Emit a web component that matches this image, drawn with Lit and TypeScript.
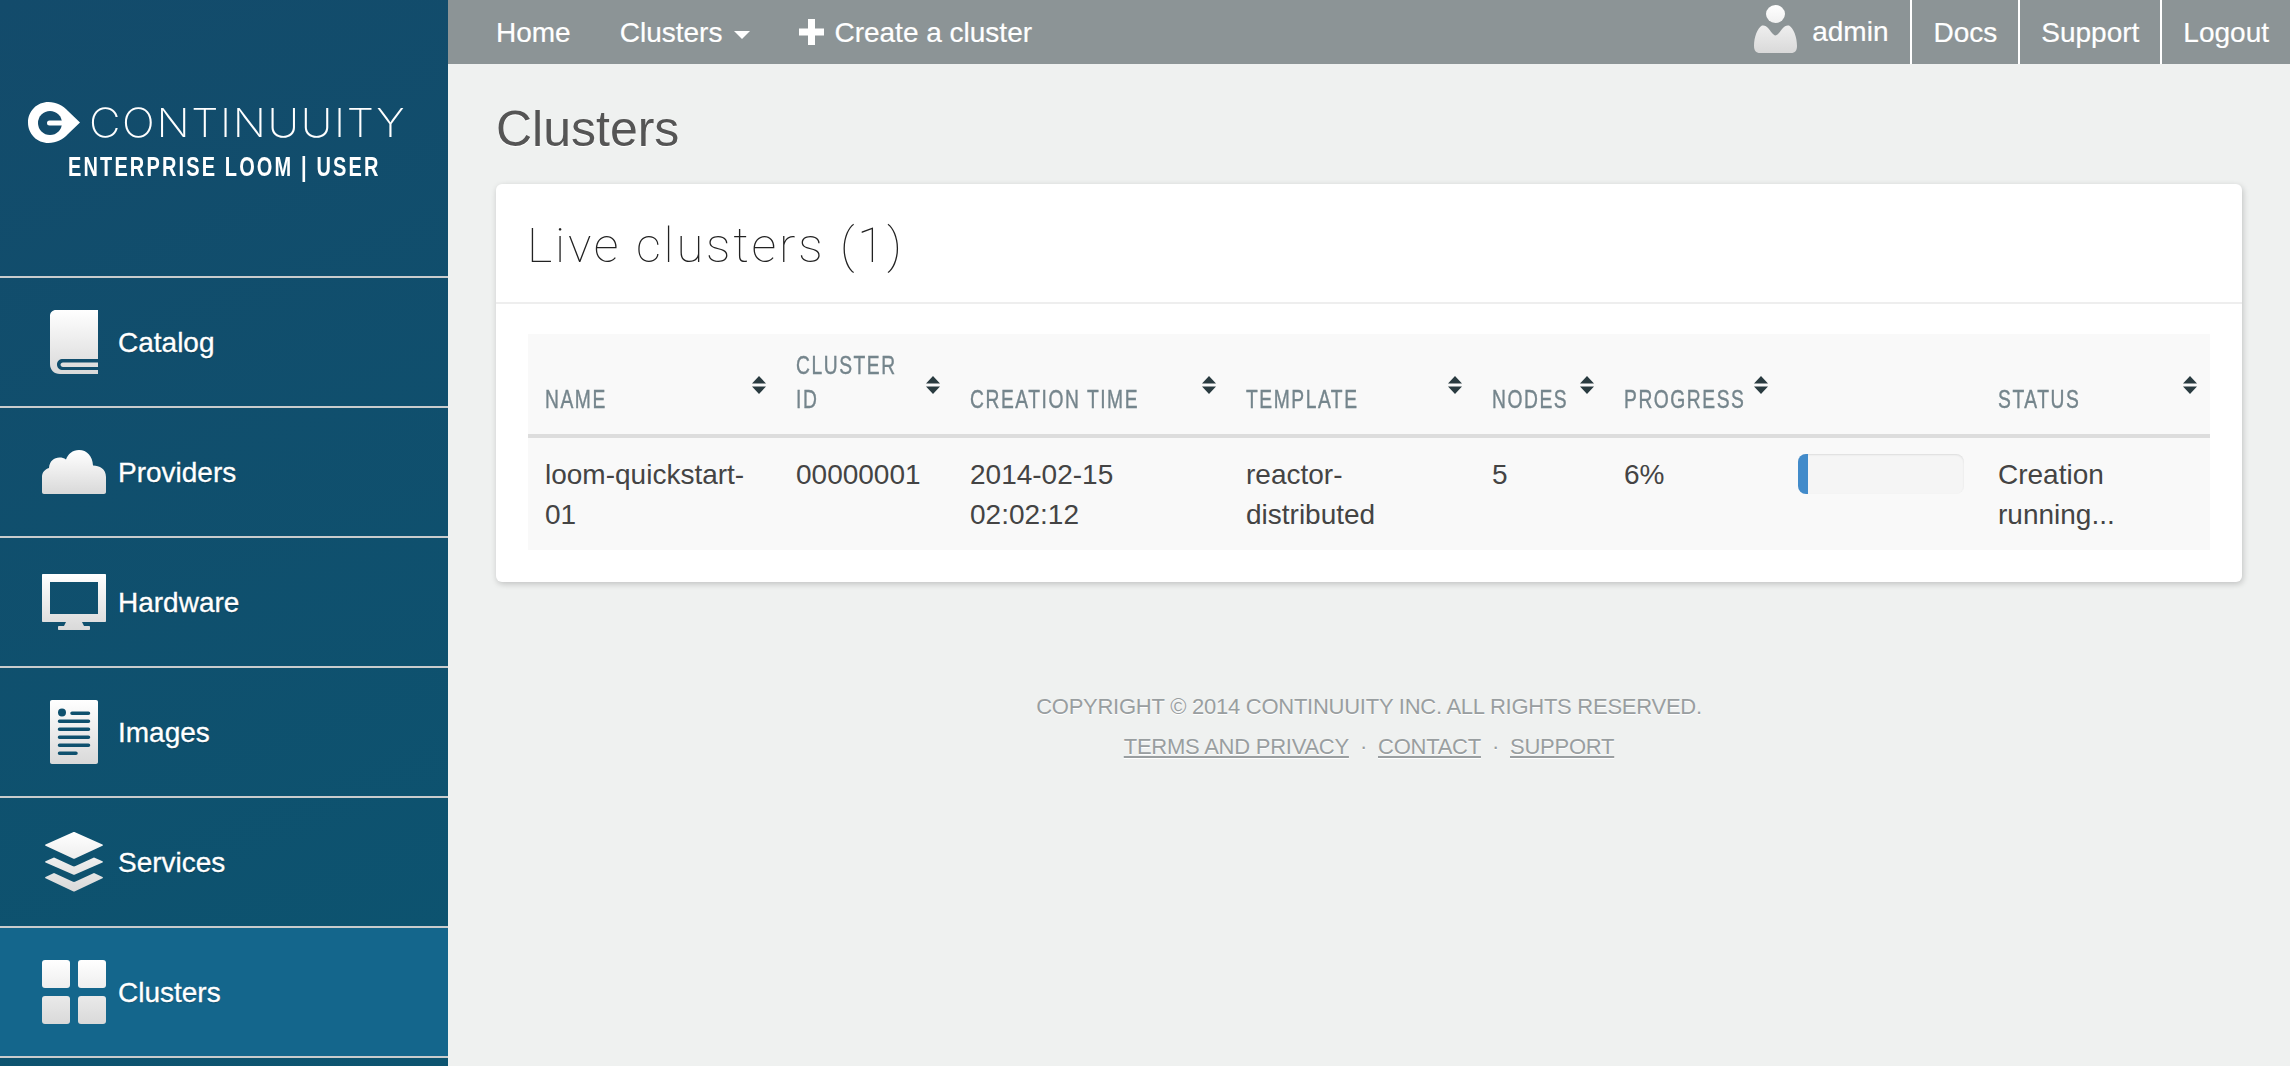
import { LitElement, html, css, svg } from 'lit';
import { customElement } from 'lit/decorators.js';

const gradient = (id: string, h: number) => svg`
  <defs>
    <linearGradient id=${id} gradientUnits="userSpaceOnUse" x1="0" y1="0" x2="0" y2=${h}>
      <stop offset="0" stop-color="#ffffff" />
      <stop offset="1" stop-color="#d9d9d9" />
    </linearGradient>
  </defs>
`;

const icons: Record<string, unknown> = {
  catalog: html`<svg width="48" height="64" viewBox="0 0 48 64">
    ${gradient('g-catalog', 64)}
    <path fill="url(#g-catalog)" fill-rule="evenodd" d="M6 0H48V49H13C9.5 49 7 51 7 54.500C7 58 9.500 60 13 60H48V64H10C4 64 0 60 0 54V6C0 2.500 2.500 0 6 0ZM13 52.500H48V57H13C11.500 57 10.500 56 10.500 54.800C10.500 53.500 11.500 52.500 13 52.500Z" />
  </svg>`,
  providers: html`<svg width="64" height="44" viewBox="0 0 64 44">
    ${gradient('g-providers', 44)}
    <path fill="url(#g-providers)" d="M2 44C0.800 44 0 43.200 0 42V27C0 22 3 19.500 7 18C7.500 11 12 7.500 17.500 7.500C20 7.500 22 8 24 9.500C26 4 30.500 0 37 0C45 0 50.500 6 51 15.500C57.500 15.500 64 19 64 27V42C64 43.200 63.200 44 62 44Z" />
  </svg>`,
  hardware: html`<svg width="64" height="56" viewBox="0 0 64 56">
    ${gradient('g-hardware', 56)}
    <path fill="url(#g-hardware)" fill-rule="evenodd" d="M1 0H63C63.600 0 64 0.400 64 1V47C64 47.600 63.600 48 63 48H40L42 52H47C47.600 52 48 52.500 48 53.200V55C48 55.600 47.600 56 47 56H17C16.400 56 16 55.600 16 55V53.200C16 52.500 16.400 52 17 52H22L24 48H1C0.400 48 0 47.600 0 47V1C0 0.400 0.400 0 1 0ZM8 8V40H56V8Z" />
  </svg>`,
  images: html`<svg width="48" height="64" viewBox="0 0 48 64">
    ${gradient('g-images', 64)}
    <path fill="url(#g-images)" fill-rule="evenodd" d="M2 0H46C47.200 0 48 0.800 48 2V62C48 63.200 47.200 64 46 64H2C0.800 64 0 63.200 0 62V2C0 0.800 0.800 0 2 0ZM12 8.500A4 4 0 1 0 12 16.500A4 4 0 1 0 12 8.500ZM22 11.500A1.750 1.750 0 0 0 22 15H38.500A1.750 1.750 0 0 0 38.500 11.500ZM9.500 19.500A1.750 1.750 0 0 0 9.500 23H38.500A1.750 1.750 0 0 0 38.500 19.500ZM9.500 27.500A1.750 1.750 0 0 0 9.500 31H38.500A1.750 1.750 0 0 0 38.500 27.500ZM9.500 35.500A1.750 1.750 0 0 0 9.500 39H38.500A1.750 1.750 0 0 0 38.500 35.500ZM9.500 43.500A1.750 1.750 0 0 0 9.500 47H38.500A1.750 1.750 0 0 0 38.500 43.500ZM9.500 51.500A1.750 1.750 0 0 0 9.500 55H26A1.750 1.750 0 0 0 26 51.500Z" />
  </svg>`,
  services: html`<svg width="58" height="60" viewBox="0 0 58 60">
    ${gradient('g-services', 60)}
    <g fill="url(#g-services)">
      <path d="M28 0.300C28.600 0 29.400 0 30 0.300L57.500 12.500C58 12.800 58 13.500 57.500 13.800L30 26.500C29.400 26.800 28.600 26.800 28 26.500L0.500 13.800C0 13.500 0 12.800 0.500 12.500Z" />
      <path d="M9 25.500L27.500 34C28.500 34.500 29.500 34.500 30.500 34L49 25.500L57.500 29.200C58 29.500 58 30.200 57.500 30.500L30 42.500C29.400 42.800 28.600 42.800 28 42.500L0.500 30.500C0 30.200 0 29.500 0.500 29.200Z" />
      <path d="M9 41L27.500 49.500C28.500 50 29.500 50 30.500 49.500L49 41L57.500 45C58 45.300 58 46 57.500 46.300L30 59.200C29.400 59.500 28.600 59.500 28 59.200L0.500 46.300C0 46 0 45.300 0.500 45Z" />
    </g>
  </svg>`,
  clusters: html`<svg width="64" height="64" viewBox="0 0 64 64">
    ${gradient('g-clusters', 64)}
    <g fill="url(#g-clusters)">
      <rect width="28" height="28" rx="3" />
      <rect x="36" width="28" height="28" rx="3" />
      <rect y="36" width="28" height="28" rx="3" />
      <rect x="36" y="36" width="28" height="28" rx="3" />
    </g>
  </svg>`,
};

const navItems = [
  { label: 'Catalog', icon: 'catalog' },
  { label: 'Providers', icon: 'providers' },
  { label: 'Hardware', icon: 'hardware' },
  { label: 'Images', icon: 'images' },
  { label: 'Services', icon: 'services' },
  { label: 'Clusters', icon: 'clusters', active: true },
];

const columns = [
  { lines: ['Name'], width: 251 },
  { lines: ['Cluster', 'ID'], width: 174 },
  { lines: ['Creation time'], width: 276 },
  { lines: ['Template'], width: 246 },
  { lines: ['Nodes'], width: 132 },
  { lines: ['Progress'], width: 174 },
  { lines: [], width: 200 },
  { lines: ['Status'], width: 229 },
];

const sortIcon = html`<svg class="sort" width="16" height="18" viewBox="0 0 16 18">
  <path d="M8 0L15 7.500H1Z M1 10.500H15L8 18Z" fill="#2a3b40" />
</svg>`;

@customElement('app-root')
export class AppRoot extends LitElement {
  static styles = css`
    :host {
      display: flex;
      min-height: 1066px;
      background: #eff1f0;
      font-family: 'Liberation Sans', Arial, sans-serif;
      font-size: 28px;
      color: #444;
    }

    .sidebar {
      flex: none;
      width: 448px;
      background: linear-gradient(160deg, #134b6b 0%, #0c5470 100%);
      color: #fff;
    }
    .logo {
      height: 276px;
      box-sizing: border-box;
      padding-top: 102px;
    }
    .logo-top {
      display: flex;
      align-items: center;
      height: 41px;
      padding-left: 28px;
      gap: 9px;
    }
    .logo-name {
      font-family: Inter, sans-serif;
      font-weight: 200;
      font-size: 40px;
      line-height: 41px;
      letter-spacing: 1.5px;
      white-space: nowrap;
      transform: scaleX(1.085);
      transform-origin: left center;
    }
    .logo-sub {
      width: 420px;
      margin-top: 8px;
      margin-left: 68px;
      font-weight: 700;
      font-size: 27px;
      line-height: 32px;
      letter-spacing: 2.9px;
      white-space: nowrap;
      transform: scaleX(0.74);
      transform-origin: left center;
    }
    .nav-item {
      display: flex;
      align-items: center;
      height: 128px;
      border-top: 2px solid #c9cccd;
      color: #fff;
      text-decoration: none;
      text-shadow: 0 1px 1px rgba(0, 0, 0, 0.25);
    }
    .nav-item:last-child {
      border-bottom: 2px solid #c9cccd;
    }
    .nav-item.active {
      background: #14668c;
    }
    .nav-icon {
      flex: none;
      width: 64px;
      margin: 0 12px 0 42px;
      display: flex;
      justify-content: center;
    }
    .nav-icon svg {
      display: block;
    }
    .nav-label {
      padding-top: 2px;
      -webkit-text-stroke: 0.3px #fff;
    }

    .main {
      flex: 1;
      min-width: 0;
    }
    .topbar {
      display: flex;
      align-items: stretch;
      height: 64px;
      background: #8c9496;
      color: #fff;
      padding-left: 48px;
    }
    .topbar a {
      color: #fff;
      text-decoration: none;
      white-space: nowrap;
      display: flex;
      align-items: center;
      padding-top: 1px;
      -webkit-text-stroke: 0.2px #fff;
    }
    .top-left {
      display: flex;
      gap: 49px;
    }
    .caret {
      margin-left: 12px;
      margin-top: 5px;
      width: 0;
      height: 0;
      border-left: 8px solid transparent;
      border-right: 8px solid transparent;
      border-top: 8px solid #fff;
    }
    .plus {
      margin-right: 10px;
      margin-top: -2px;
    }
    .top-right {
      display: flex;
      margin-left: auto;
    }
    .top-right a {
      border-left: 2px solid #fff;
      padding: 1px 21px 0;
    }
    .user {
      display: flex;
      align-items: center;
      height: 58px;
      padding-right: 22px;
      border-right: 2px solid #fff;
      margin-right: -2px;
    }
    .user svg {
      margin-right: 15px;
    }
    .user span {
      padding-top: 6px;
      -webkit-text-stroke: 0.2px #fff;
    }

    .content {
      padding: 33px 48px 0;
    }
    h2 {
      margin: 0 0 23px;
      font-weight: 400;
      font-size: 50px;
      line-height: 64px;
      color: #555;
      text-shadow: 0 1px 0 #fff;
    }
    .card {
      background: #fff;
      border-radius: 6px;
      box-shadow: 1px 2px 6px rgba(0, 0, 0, 0.2);
    }
    .card-head {
      height: 120px;
      box-sizing: border-box;
      padding: 4px 31px 0;
      border-bottom: 2px solid #eee;
      display: flex;
      align-items: center;
      font-family: Roboto, sans-serif;
      font-weight: 100;
      font-size: 49px;
      letter-spacing: 2.8px;
      color: #222;
    }
    .card-body {
      padding: 30px 32px 32px;
    }
    table {
      width: 100%;
      table-layout: fixed;
      border-collapse: separate;
      border-spacing: 0;
      background: #f9f9f9;
    }
    th {
      height: 104px;
      box-sizing: border-box;
      padding: 14px 12px 18px 17px;
      border-bottom: 4px solid #ddd;
      vertical-align: top;
      text-align: left;
      font-weight: 400;
      font-size: 25px;
      line-height: 34px;
      letter-spacing: 2px;
      color: #75858c;
      text-transform: uppercase;
      -webkit-text-stroke: 0.4px #75858c;
    }
    .th-inner {
      display: flex;
      justify-content: space-between;
      align-items: flex-end;
      height: 68px;
    }
    .th-label {
      flex: 1;
      min-width: 0;
      white-space: nowrap;
      transform: scaleX(0.77);
      transform-origin: left center;
    }
    .sort {
      flex: none;
      align-self: flex-start;
      margin-top: 28px;
    }
    td {
      padding: 17px 17px 15px;
      vertical-align: top;
      line-height: 40px;
    }
    .progress {
      height: 40px;
      margin-top: -1px;
      border-radius: 8px;
      background: #f5f5f5;
      box-shadow: inset 0 1px 2px rgba(0, 0, 0, 0.1);
      overflow: hidden;
    }
    .progress-bar {
      height: 100%;
      background: #428bca;
    }

    footer {
      margin-top: 105px;
      text-align: center;
      font-size: 22px;
      letter-spacing: -0.25px;
      line-height: 40px;
      color: #999ea0;
      text-shadow: 0 1px 0 #fff;
    }
    .foot-links {
      display: flex;
      justify-content: center;
      gap: 11px;
    }
    .foot-links a {
      color: #999ea0;
      text-decoration: underline;
    }
  `;

  renderHead(lines: string[], i: number) {
    return html`<th style="width:${columns[i].width}px">
      <div class="th-inner">
        <span class="th-label">${lines.map((l, n) => html`${n ? html`<br />` : ''}${l}`)}</span>
        ${lines.length ? sortIcon : ''}
      </div>
    </th>`;
  }

  render() {
    return html`
      <aside class="sidebar">
        <div class="logo">
          <div class="logo-top">
            <svg width="52" height="41" viewBox="0 0 52 41">
              <path fill="#fff" d="M20.500 0C28.500 0 35 3.500 40 9L52 20.500L40 32C35 37.500 28.500 41 20.500 41C9 41 0 32 0 20.500C0 9 9 0 20.500 0Z" />
              <circle cx="22" cy="21" r="12" fill="#134b6b" />
              <path fill="#fff" d="M21.500 18.500H36V23.500H21.500A2.500 2.500 0 0 1 21.500 18.500Z" />
            </svg>
            <span class="logo-name">CONTINUUITY</span>
          </div>
          <div class="logo-sub">ENTERPRISE LOOM | USER</div>
        </div>
        ${navItems.map(
          (item) => html`<a class="nav-item ${item.active ? 'active' : ''}" href="#">
            <span class="nav-icon">${icons[item.icon]}</span>
            <span class="nav-label">${item.label}</span>
          </a>`
        )}
      </aside>

      <div class="main">
        <nav class="topbar">
          <div class="top-left">
            <a href="#">Home</a>
            <a href="#">Clusters<span class="caret"></span></a>
            <a href="#">
              <svg class="plus" width="25" height="26" viewBox="0 0 25 26">
                <path fill="#fff" d="M9 0H16V9.500H25V16.500H16V26H9V16.500H0V9.500H9Z" />
              </svg>
              Create a cluster
            </a>
          </div>
          <div class="top-right">
            <div class="user">
              <svg width="43" height="48" viewBox="0 0 43 48">
                ${gradient('g-user', 48)}
                <g fill="url(#g-user)">
                  <ellipse cx="21.500" cy="9" rx="9.500" ry="9" />
                  <path d="M8 20.500C10.500 20 12.500 21 14.500 23.500C16.500 26 19 30 21.500 30.500C24 30 26.500 26 28.500 23.500C30.500 21 32.500 20 35 20.500C39.500 23 43 32 43 41C43 45.500 41 48 37 48H6C2 48 0 45.500 0 41C0 32 3.500 23 8 20.500Z" />
                </g>
              </svg>
              <span>admin</span>
            </div>
            <a href="#">Docs</a>
            <a href="#">Support</a>
            <a href="#">Logout</a>
          </div>
        </nav>

        <div class="content">
          <h2>Clusters</h2>
          <section class="card">
            <div class="card-head">Live clusters (1)</div>
            <div class="card-body">
              <table>
                <thead>
                  <tr>${columns.map((c, i) => this.renderHead(c.lines, i))}</tr>
                </thead>
                <tbody>
                  <tr>
                    <td>loom-quickstart-01</td>
                    <td>00000001</td>
                    <td>2014-02-15 02:02:12</td>
                    <td>reactor-distributed</td>
                    <td>5</td>
                    <td>6%</td>
                    <td>
                      <div class="progress"><div class="progress-bar" style="width:6%"></div></div>
                    </td>
                    <td>Creation running...</td>
                  </tr>
                </tbody>
              </table>
            </div>
          </section>

          <footer>
            <div>COPYRIGHT © 2014 CONTINUUITY INC. ALL RIGHTS RESERVED.</div>
            <div class="foot-links">
              <a href="#">TERMS AND PRIVACY</a>
              <span>·</span>
              <a href="#">CONTACT</a>
              <span>·</span>
              <a href="#">SUPPORT</a>
            </div>
          </footer>
        </div>
      </div>
    `;
  }
}
